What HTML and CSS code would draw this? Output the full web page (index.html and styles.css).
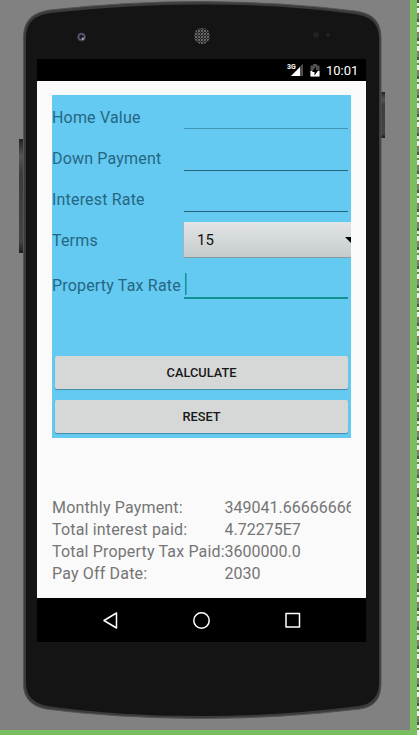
FILE: index.html
```
<!DOCTYPE html>
<html lang="en">
<head>
<meta charset="utf-8">
<title>Mortgage Calculator</title>
<link rel="stylesheet" href="styles.css">
</head>
<body>
<main class="stage">
  <svg class="device" viewBox="0 0 419 735" aria-hidden="true">
    <defs>
      <pattern id="mesh" width="3" height="3" patternUnits="userSpaceOnUse">
        <rect width="3" height="3" fill="#222"/>
        <circle cx="1" cy="1" r=".9" fill="#858585"/>
        <circle cx="2.5" cy="2.5" r=".6" fill="#555"/>
      </pattern>
      <linearGradient id="key" x2="0" y2="1">
        <stop offset="0" stop-color="#222"/><stop offset=".15" stop-color="#555"/>
        <stop offset=".3" stop-color="#3c3c3c"/><stop offset=".9" stop-color="#444"/><stop offset="1" stop-color="#1c1c1c"/>
      </linearGradient>
    </defs>
    <rect x="19" y="139" width="4" height="114" fill="url(#key)"/>
    <rect x="381" y="92" width="4" height="46" fill="url(#key)"/>
    <path d="M23.5 38C23.500 20 33 12.500 50 10Q125 1.500 202 1.500Q285 2 355 11C373 13.500 381 21 381 39V684C381 699 374 707 360 709Q280 718.500 202 718.500Q115 718 46 709C31 706 23.500 698 23.500 684Z" fill="#3b3b3b" stroke="#535353"/>
    <path d="M26 39C26 22 34 15.500 51 13Q125 4.500 202 4.500Q285 4.500 354 14C371 16.500 379 23 379 40V683C379 696 372 704 359 706Q280 716 202 716Q115 716 47 706C33 703 26 696 26 683Z" fill="#141414"/>
    <circle cx="81.500" cy="37" r="4.500" fill="#393746"/>
    <circle cx="81.500" cy="37" r="3" fill="#171729" stroke="#77748e"/>
    <circle cx="82.800" cy="38.800" r="1.200" fill="#a9a8b8"/>
    <circle cx="202" cy="36" r="8" fill="url(#mesh)"/>
    <circle cx="316" cy="35" r="3" fill="#222"/><circle cx="328" cy="35" r="2" fill="#202020"/>
  </svg>
  <section class="screen">
    <header class="status">
      <svg class="status-icons" viewBox="0 0 36 22" aria-hidden="true">
        <path d="M17 5V17H5Z" fill="#4c4c4c"/><path d="M17 5V17H14V8Z" fill="#4c4c4c"/><path d="M14 8V17H5Z" fill="#fff"/>
        <path d="M27 5h4v1.500h2.500V17.500h-9V6.500H27Z" fill="#505050"/><path d="M24.500 12h9V17.500h-9Z" fill="#fff"/>
        <path d="M30 7.500l-4 5.500h2.500V16.500l4-5.500H30Z" fill="#000"/>
        <text class="network" x="1" y="10">3G</text>
      </svg>
      <time>10:01</time>
    </header>
    <div class="app">
      <form class="panel">
        <label class="row"><span class="name">Home Value</span><span class="field pale"></span></label>
        <label class="row"><span class="name">Down Payment</span><span class="field"></span></label>
        <label class="row"><span class="name">Interest Rate</span><span class="field"></span></label>
        <div class="row terms"><span class="name">Terms</span><div class="spinner"><span>15</span><i class="arrow"></i></div></div>
        <label class="row tax"><span class="name">Property Tax Rate</span><span class="field active"></span></label>
        <button type="button">CALCULATE</button>
        <button type="button">RESET</button>
      </form>
      <dl class="results">
        <dt>Monthly Payment:</dt><dd>349041.6666666667</dd>
        <dt>Total interest paid:</dt><dd>4.72275E7</dd>
        <dt>Total Property Tax Paid:</dt><dd>3600000.0</dd>
        <dt>Pay Off Date:</dt><dd>2030</dd>
      </dl>
    </div>
    <nav class="nav">
      <svg viewBox="0 0 329 44" aria-hidden="true" fill="none" stroke="#fff" stroke-width="1.500" stroke-linejoin="round">
        <path d="M67 22.500L79.500 15V30Z"/><circle cx="164.500" cy="22.500" r="7.700"/><rect x="249" y="15.500" width="13.500" height="13.500"/>
      </svg>
    </nav>
  </section>
</main>
<aside class="edge"></aside>
</body>
</html>
```
FILE: styles.css
```
* { box-sizing: border-box; }
body {
  margin: 0;
  width: 419px;
  height: 735px;
  overflow: hidden;
  display: flex;
  background: #79bf62;
  font-family: Roboto, "Liberation Sans", sans-serif;
  font-size: 16px;
}
.stage {
  position: relative;
  width: 410px;
  height: 730px;
  padding: 59px 0 0 37px;
  background: #818181;
  overflow: hidden;
}
.device {
  position: absolute;
  top: 0;
  left: 0;
  width: 419px;
  height: 735px;
}
.screen {
  position: relative;
  width: 329px;
  height: 583px;
  display: flex;
  flex-direction: column;
  background: #000;
}
.status {
  height: 22px;
  display: flex;
  justify-content: flex-end;
  align-items: center;
  gap: 4px;
  padding-right: 8px;
  color: #fff;
  font-size: 13px;
  line-height: 23px;
}
.status time { width: 32px; font-weight: 400; white-space: nowrap; }
.status-icons { width: 36px; height: 22px; }
.network { fill: #fff; font-size: 7px; font-weight: 700; }
.app {
  height: 517px;
  padding: 14.4px 15px 0;
  background: #fafafa;
}
.panel {
  height: 342.6px;
  background: #64caf2;
  overflow: hidden;
}
.row {
  height: 41.3px;
  display: grid;
  grid-template-columns: 132px 1fr;
  align-items: center;
  color: #256782;
  white-space: nowrap;
}
.name { letter-spacing: .18px; padding-top: 2px; }
.field {
  height: 24px;
  align-self: start;
  margin: 10px 3px 0 0;
  border-bottom: 1px solid #23647a;
}
.field.pale { border-color: #4295b5; }
.terms { height: 41px; }
.terms .name { padding-top: 1px; }
.spinner {
  height: 36px;
  display: flex;
  align-items: center;
  justify-content: space-between;
  padding-left: 13px;
  margin: 1px 0 0 -1px;
  background: linear-gradient(#e1e5e5, #c6cbcb);
  border-bottom: 1px solid #8a9b9f;
  border-left: 1px solid #9db6bd;
  color: #111;
  font-size: 15px;
  overflow: hidden;
}
.arrow {
  flex: none;
  width: 0;
  border: 6px solid transparent;
  border-top-color: #000;
  border-bottom: 0;
  margin-right: -6px;
}
.tax { height: 48px; margin-bottom: 47.6px; }
.field.active {
  height: 26px;
  margin-top: 12.5px;
  border-bottom: 2px solid #109295;
  background: linear-gradient(#109295, #109295) 1px 0 / 1.500px 22px no-repeat;
}
button {
  display: block;
  width: 293px;
  height: 33px;
  margin: 0 3px 11px;
  padding: 0;
  border: 0;
  border-radius: 2px;
  background: #d6d7d7;
  box-shadow: 0 1px 1px #438ba6;
  color: #181818;
  font: 500 12.8px/33px Roboto, sans-serif;
}
.results {
  display: grid;
  grid-template-columns: 172.5px 1fr;
  grid-auto-rows: 22.2px;
  margin: 58.6px 0 0;
  line-height: 22px;
  color: #757575;
  white-space: nowrap;
  overflow: hidden;
}
.results dt { letter-spacing: .17px; }
.results dd { margin: 0; overflow: hidden; }
.nav { height: 44px; }
.nav svg { display: block; width: 329px; height: 44px; }
.edge {
  width: 2px;
  height: 735px;
  margin-left: 7px;
  background: repeating-linear-gradient(#50563f 0 3px, #dfe7d5 3px 6px, #68863d 6px 8px, #eee 8px 13px, #a4683d 13px 14px, #79816a 14px 19px);
}
```
